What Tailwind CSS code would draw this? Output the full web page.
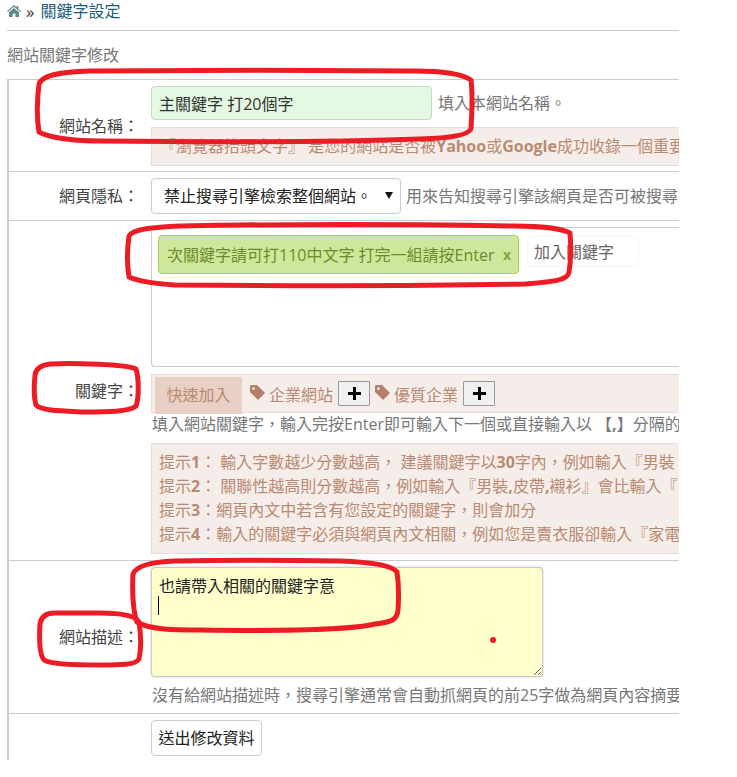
<!DOCTYPE html>
<html lang="zh-Hant">
  <head>
    <meta charset="UTF-8" />
    <title>關鍵字設定</title>
    <script src="https://cdn.jsdelivr.net/npm/@tailwindcss/browser@4"></script>
  </head>
  <body class="bg-white font-['Open_Sans','Noto_Sans_CJK_TC',sans-serif] text-[16px] text-[#777]">
    <div class="relative w-[737px] h-[777px] overflow-hidden">
      <div class="w-[672px] ml-[7px] h-[760px] overflow-hidden">
        <!-- Breadcrumb -->
        <div class="h-[22px] flex items-center gap-[5px]">
          <svg class="w-[14px] h-[12px]" viewBox="0 0 14 12" fill="#5b8a8c">
            <path d="M7 0 L9.6 2.3 V1 H11.4 V3.9 L14 6.2 L13.2 7 L7 1.7 L0.8 7 L0 6.2 Z" />
            <path d="M7 2.9 L12 7.2 V12 H8.4 V8.4 H5.6 V12 H2 V7.2 Z" />
          </svg>
          <span class="text-[#333] text-[17px] leading-none">»</span>
          <span class="ml-[1px] text-[#1d5c7c] leading-none">關鍵字設定</span>
        </div>
        <div class="h-[31px] border-b border-[#ccc] -mt-[22px] mb-[14px]"></div>
        <h2 class="h-[20px] leading-[20px] text-[#777] font-normal mb-[14px]">網站關鍵字修改</h2>

        <!-- Form -->
        <div class="border-l-2 border-t border-[#ccc]">
          <!-- Site name -->
          <div class="flex h-[92px] border-b border-[#ccc]">
            <label class="w-[136px] shrink-0 self-center text-right pr-[6px] text-[#444]">網站名稱：</label>
            <div class="flex-1 pl-[6px] pt-[6px] min-w-0">
              <div class="flex items-center gap-[6px]">
                <input class="w-[281px] h-[34px] px-[7px] rounded bg-[#e4f9e1] border border-[#c8d8c4] text-[#333] text-[16px]" value="主關鍵字 打20個字" />
                <span class="whitespace-nowrap">填入本網站名稱。</span>
              </div>
              <div class="mt-[7px] -mr-[10px] h-[39px] leading-[37px] px-[8px] bg-[#f5ede9] border border-[#e8dad4] text-[#b98a72] whitespace-nowrap overflow-hidden">『瀏覽器抬頭文字』 是您的網站是否被<b>Yahoo</b>或<b>Google</b>成功收錄一個重要</div>
            </div>
          </div>

          <!-- Privacy -->
          <div class="flex h-[49px] border-b border-[#ccc]">
            <label class="w-[136px] shrink-0 self-center text-right pr-[6px] text-[#444]">網頁隱私：</label>
            <div class="flex-1 pl-[6px] pt-[6px] flex gap-[5px] items-start min-w-0">
              <div class="relative shrink-0">
                <select class="appearance-none w-[250px] h-[36px] pl-[12px] bg-white border border-[#ccc] rounded text-[#222] text-[16px]">
                  <option>禁止搜尋引擎檢索整個網站。</option>
                </select>
                <svg class="absolute right-[8px] top-[14px] w-[8px] h-[7px]" viewBox="0 0 8 7" fill="#111"><path d="M0 0H8L4 7Z" /></svg>
              </div>
              <span class="whitespace-nowrap leading-[36px]">用來告知搜尋引擎該網頁是否可被搜尋</span>
            </div>
          </div>

          <!-- Keywords -->
          <div class="flex h-[340px] border-b border-[#ccc]">
            <label class="w-[136px] shrink-0 self-center text-right pr-[6px] text-[#444]">關鍵字：</label>
            <div class="flex-1 pl-[6px] pt-[6px] min-w-0">
              <div class="h-[140px] border border-[#ccc] border-r-0 rounded-bl pl-[6px] pt-[7px] flex items-start gap-[7px]">
                <span class="h-[39px] w-[361px] shrink-0 flex items-center justify-between pl-[8px] pr-[7px] bg-[#cfe79d] border border-[#a5d24a] rounded-sm text-[#6b8c2c] whitespace-nowrap">次關鍵字請可打110中文字 打完一組請按Enter <b class="text-[#84a83e] text-[14px]">x</b></span>
                <span class="h-[31px] w-[113px] shrink-0 mt-px px-[7px] leading-[31px] border border-[#f5f5f5] rounded-sm text-[#666] whitespace-nowrap">加入關鍵字</span>
              </div>
              <div class="mt-[7px] -mr-[10px] h-[39px] bg-[#f5ede9] border border-[#e8dad4] pl-[3px] flex items-start text-[#b98a72] whitespace-nowrap">
                <span class="w-[87px] h-[37px] mt-[2px] -mb-[2px] bg-[#e8d0c5] text-center leading-[37px]">快速加入</span>
                <svg class="w-[15px] h-[15px] ml-[8px] mt-[10px]" viewBox="0 0 15 15" fill="#b5806a"><path fill-rule="evenodd" d="M0 1.5 Q0 0 1.5 0 H7 L14.6 7.6 Q15 8 14.6 8.5 L8.5 14.6 Q8 15 7.6 14.6 L0 7Z M3.5 2.2 A1.4 1.4 0 1 0 3.5 5 A1.4 1.4 0 1 0 3.5 2.2Z" /></svg>
                <span class="ml-[4px] mt-[8px] leading-[24px]">企業網站</span>
                <button class="ml-[5px] mt-[6px] w-[32px] h-[25px] bg-[#f0f0f0] border border-[#999] rounded-[1px] flex items-center justify-center"><svg class="w-[13px] h-[13px]" viewBox="0 0 13 13" fill="#000"><path d="M5 0H8V5H13V8H8V13H5V8H0V5H5Z" /></svg></button>
                <svg class="w-[15px] h-[15px] ml-[5px] mt-[10px]" viewBox="0 0 15 15" fill="#b5806a"><path fill-rule="evenodd" d="M0 1.5 Q0 0 1.5 0 H7 L14.6 7.6 Q15 8 14.6 8.5 L8.5 14.6 Q8 15 7.6 14.6 L0 7Z M3.5 2.2 A1.4 1.4 0 1 0 3.5 5 A1.4 1.4 0 1 0 3.5 2.2Z" /></svg>
                <span class="ml-[4px] mt-[8px] leading-[24px]">優質企業</span>
                <button class="ml-[5px] mt-[6px] w-[32px] h-[25px] bg-[#f0f0f0] border border-[#999] rounded-[1px] flex items-center justify-center"><svg class="w-[13px] h-[13px]" viewBox="0 0 13 13" fill="#000"><path d="M5 0H8V5H13V8H8V13H5V8H0V5H5Z" /></svg></button>
              </div>
              <p class="h-[30px] leading-[22px] pl-px whitespace-nowrap">填入網站關鍵字，輸入完按Enter即可輸入下一個或直接輸入以 【<b>,</b>】分隔的</p>
              <div class="h-[111px] -mr-[10px] bg-[#f5ede9] border border-[#e8dad4] px-[7px] py-[6px] leading-[24px] text-[#b98a72] whitespace-nowrap overflow-hidden">
                <div>提示<b>1</b>： 輸入字數越少分數越高， 建議關鍵字以<b>30</b>字內，例如輸入『男裝</div>
                <div>提示<b>2</b>： 關聯性越高則分數越高，例如輸入『男裝<b>,</b>皮帶<b>,</b>襯衫』會比輸入『</div>
                <div>提示<b>3</b>：網頁內文中若含有您設定的關鍵字，則會加分</div>
                <div>提示<b>4</b>：輸入的關鍵字必須與網頁內文相關，例如您是賣衣服卻輸入『家電</div>
              </div>
            </div>
          </div>

          <!-- Description -->
          <div class="flex h-[153px] border-b border-[#ccc]">
            <label class="w-[136px] shrink-0 self-center text-right pr-[6px] text-[#444]">網站描述：</label>
            <div class="flex-1 pl-[6px] pt-[6px] min-w-0">
              <div class="relative w-[392px] h-[110px]">
                <textarea class="block w-full h-full px-[7px] py-[6px] bg-[#ffffcc] border border-[#ccc] rounded-sm shadow-[0_0_2px_#bbb] text-[#222] text-[16px] leading-[24px]">也請帶入相關的關鍵字意</textarea>
                <span class="absolute left-[7px] top-[29px] w-px h-[19px] bg-black"></span>
              </div>
              <p class="mt-[6px] leading-[24px] pl-px whitespace-nowrap">沒有給網站描述時，搜尋引擎通常會自動抓網頁的前25字做為網頁內容摘要</p>
            </div>
          </div>

          <!-- Submit -->
          <div class="h-[47px] pl-[142px] pt-[6px]">
            <button class="h-[36px] w-[111px] bg-white border border-[#ccc] rounded text-[#222]">送出修改資料</button>
          </div>
        </div>
      </div>

      <!-- Hand-drawn red annotations over the screenshot -->
      <svg class="absolute inset-0 pointer-events-none" width="737" height="777" viewBox="0 0 737 777" fill="none" stroke="#ed1c24" stroke-width="5" stroke-linecap="round" stroke-linejoin="round">
        <path d="M90 71 C60 72 42 75 39 84 C37 100 37 120 39 132 C50 138 75 141 100 141 C200 142 340 142 420 139 C450 138 470 135 471 128 C472 110 473 95 471 80 C462 74 440 71 415 71 C320 70 180 70 90 71Z" />
        <path d="M180 226 C155 227 132 229 129 236 C127 250 127 265 129 277 C140 282 160 284 175 285 C300 286 430 286 525 284 C550 282 568 281 569 272 C571 260 571 245 570 233 C560 228 535 226 515 226 C400 224 280 224 180 226Z" />
        <path d="M50 364 C42 365 36 368 35 375 C34 385 34 398 36 405 C42 411 60 411 85 412 C105 412 130 412 136 406 C139 398 139 378 136 369 C128 364 70 363 50 364Z" />
        <path d="M55 613 C46 613 41 617 40 624 C39 640 40 655 44 660 C52 665 80 665 100 665 C120 665 136 665 139 659 C141 650 141 635 139 622 C135 615 120 613 100 613Z" />
        <path d="M175 561 C150 562 136 566 133 574 C132 590 133 612 137 622 C150 630 175 630 200 630 C270 631 350 630 375 624 C392 622 397 620 398 610 C399 595 399 585 397 572 C392 565 370 562 340 561 C280 560 220 560 175 561Z" />
        <circle cx="493" cy="640" r="3" fill="#ed1c24" stroke="none" />
      </svg>
    </div>
  </body>
</html>
